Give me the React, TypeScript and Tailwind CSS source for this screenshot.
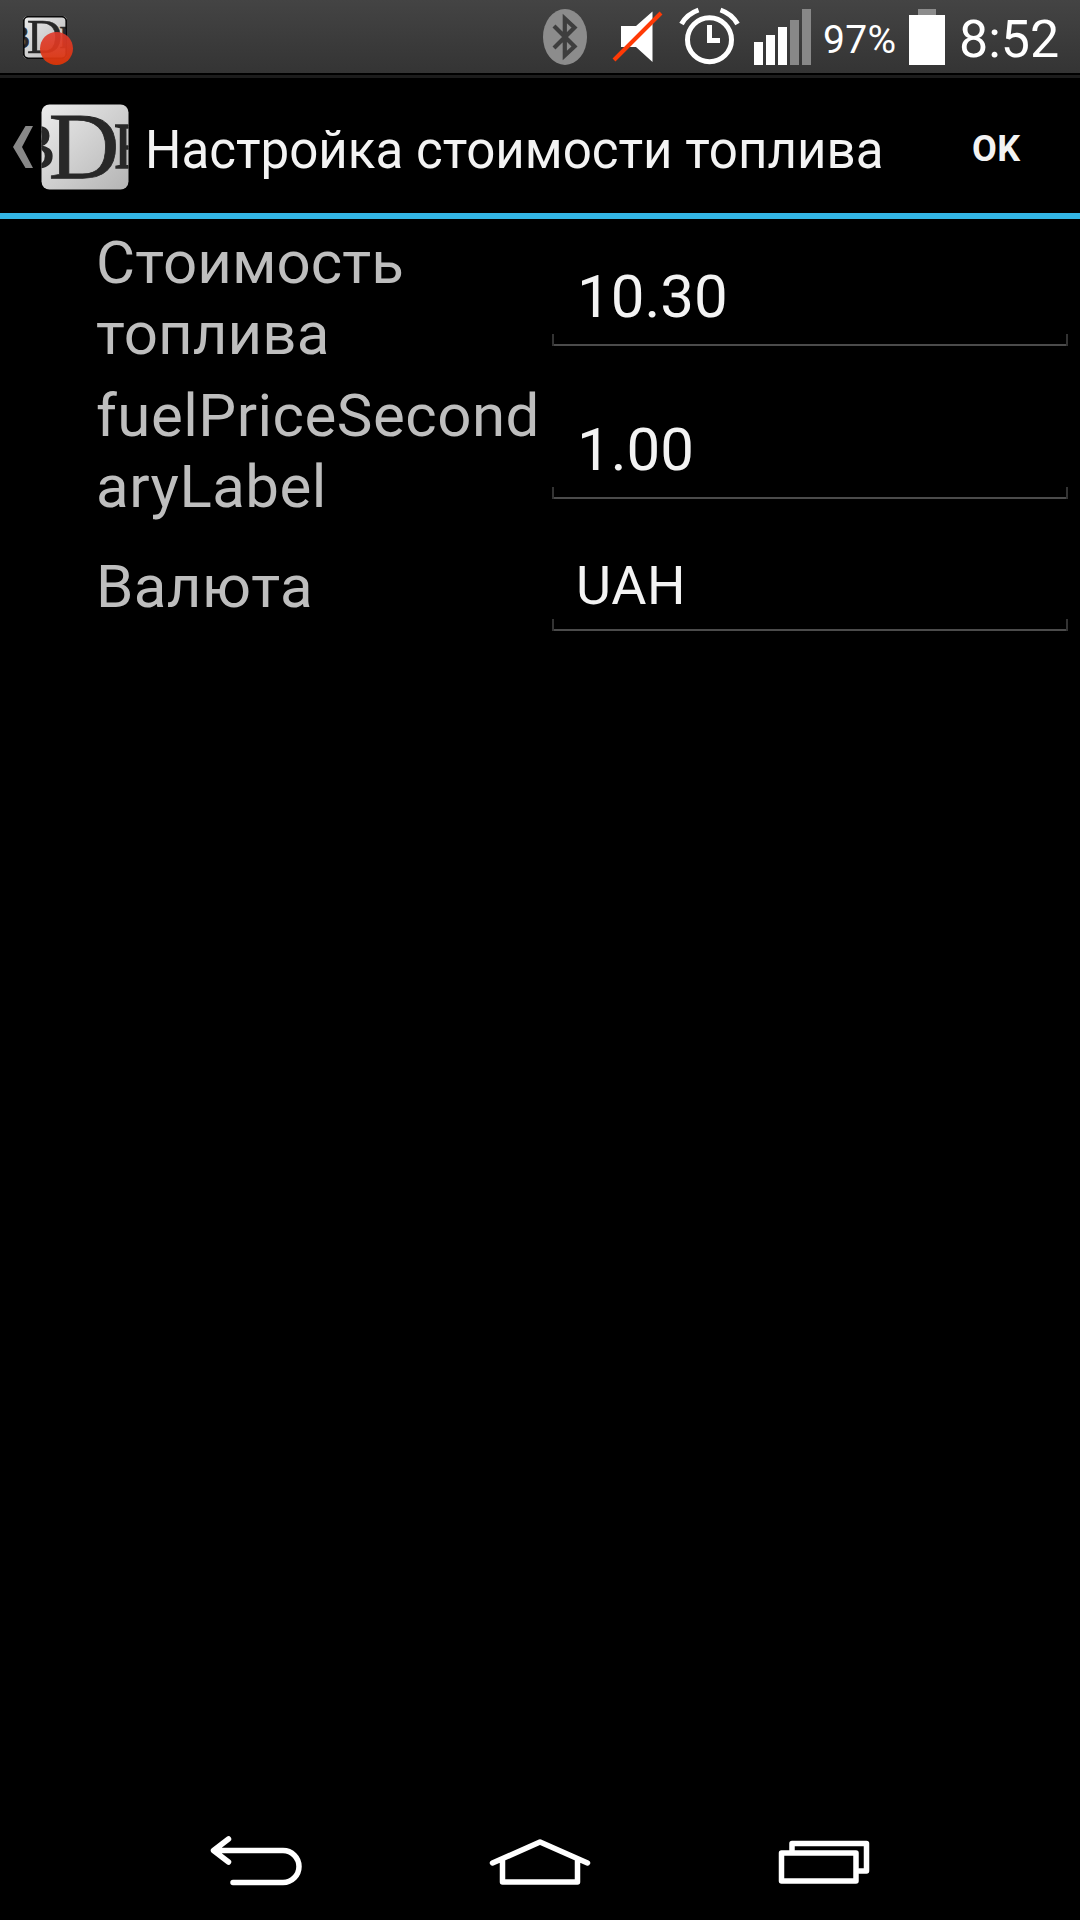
import React from "react";

function Logo({ className, outline = false }: { className: string; outline?: boolean }) {
  const id = outline ? "small" : "large";
  return (
    <svg className={className} viewBox="0 0 88 87" preserveAspectRatio="none" fontFamily="Liberation Serif, serif">
      <defs>
        <linearGradient id={`g-${id}`} x1="0" y1="0" x2="1" y2="1">
          <stop offset="0" stopColor="#ececec" />
          <stop offset="1" stopColor="#b4b4b4" />
        </linearGradient>
        <clipPath id={`c-${id}`}>
          <rect x="0.5" y="0.5" width="87" height="86" rx="8" />
        </clipPath>
      </defs>
      <g clipPath={`url(#c-${id})`} fill="#282828" stroke="#282828">
        <rect width="88" height="87" fill={`url(#g-${id})`} stroke="none" />
        <text x="-28" y="65" fontSize="64" strokeWidth="1.5" textLength="42" lengthAdjust="spacingAndGlyphs">B</text>
        <text x="7.5" y="75.500" fontSize="97" strokeWidth="0.8" textLength="71" lengthAdjust="spacingAndGlyphs">D</text>
        <text x="73" y="65" fontSize="66" strokeWidth="1.5" textLength="38" lengthAdjust="spacingAndGlyphs">R</text>
      </g>
      {outline && <rect x="1.5" y="1.5" width="85" height="84" rx="9" fill="none" stroke="#0a0a0a" strokeWidth="3.500" />}
    </svg>
  );
}

function StatusBar() {
  return (
    <div className="flex h-[73px] items-start bg-linear-to-b from-[#444444] to-[#343434]">
      <div className="relative ml-[23px] mt-4">
        <Logo outline className="h-[43px] w-[44px]" />
        <div className="absolute left-[17px] top-4 size-[33px] rounded-full bg-linear-to-b from-[#e03a2c]/90 to-[#dc3505]/95" />
      </div>
      <svg className="ml-auto h-[73px] w-[290px] shrink-0" viewBox="530 0 290 73">
        <ellipse cx="565" cy="37" rx="22" ry="28" fill="#8c8c8c" />
        <path d="M554 26 L574.500 46.500 L564.800 55.500 V18.500 L574.500 27.500 L554 48" fill="none" stroke="#3e3e3e" strokeWidth="4.200" />
        <path d="M621 26 H636 L652.500 11.500 V62 L636 47 H621 Z" fill="#fff" />
        <path d="M614 60 L661 13" stroke="#ff3a06" strokeWidth="4" />
        <circle cx="709.500" cy="39.700" r="22" fill="none" stroke="#fff" strokeWidth="5" />
        <path d="M709.500 25 V40.500 H720" fill="none" stroke="#fff" strokeWidth="5" />
        <path d="M681.500 24 Q687 14 698.500 10 M720.500 10 Q732 14 737.500 24" fill="none" stroke="#fff" strokeWidth="5" />
        <path d="M754 42 H763 V65 H754 Z M766 35 H775 V65 H766 Z M778 27 H787 V65 H778 Z" fill="#fff" />
        <path d="M790 20 H799 V65 H790 Z M802 9 H811 V65 H802 Z" fill="#888" />
      </svg>
      <span className="ml-[3px] mt-[17px] w-[86px] whitespace-nowrap text-[39px] leading-[46px] tracking-[0.3px] text-white">97%</span>
      <svg className="h-[73px] w-[36px] shrink-0" viewBox="0 0 36 73">
        <path d="M9 9 H27 V15 H9 Z" fill="#8c8c8c" />
        <path d="M0 15 H36 V65 H0 Z" fill="#fff" />
      </svg>
      <span className="ml-[14px] mt-[10px] w-[121px] whitespace-nowrap text-[52px] leading-[60px] text-white">8:52</span>
    </div>
  );
}

function ActionBar() {
  return (
    <header className="flex h-[141px] items-start border-b-[6px] border-[#33b5e5]">
      <svg className="ml-[13px] mt-[48px] h-[42px] w-[20px]" viewBox="0 0 20 42">
        <path d="M12.500 0 H20 L9 21 L20 42 H12.500 L0 21 Z" fill="#888" />
      </svg>
      <Logo className="ml-2 mt-[26px] h-[86px] w-[88px]" />
      <h1 className="ml-[16px] mt-[40px] w-[759px] origin-left scale-x-[0.946] whitespace-nowrap text-[54px] leading-[64px] text-[#f3f3f3]">Настройка стоимости топлива</h1>
      <button className="ml-[68px] mt-[49px] text-[36px] font-bold leading-[44px] tracking-[0.5px] text-[#f3f3f3]">OK</button>
    </header>
  );
}

function Field({ value, className }: { value: string; className: string }) {
  return (
    <div className={`relative ml-[6px] w-[516px] whitespace-nowrap text-[#f3f3f3] ${className}`}>
      {value}
      <div className="absolute inset-x-0 bottom-0 h-3 border-x-2 border-[#333]" />
      <div className="absolute inset-x-[2px] bottom-0 h-[2px] bg-[#4b4b4b]" />
    </div>
  );
}

function Label({ lines, className }: { lines: string[]; className: string }) {
  return (
    <div className={`w-[450px] whitespace-nowrap text-[60px] leading-[71px] text-[#bebebe] ${className}`}>
      {lines.map((l) => <div key={l}>{l}</div>)}
    </div>
  );
}

function NavBar() {
  return (
    <nav className="mt-auto flex h-[110px]">
      <svg className="h-[110px] w-full" viewBox="0 1810 1080 110" fill="none" stroke="#fff" strokeWidth="5.500" strokeLinecap="round" strokeLinejoin="round">
        <path d="M228.500 1839 L213.500 1850.500 L228.500 1862 M214 1850.500 H283 A16 16 0 0 1 283 1882.500 H233" />
        <path d="M492.500 1863 L540 1842 L587.500 1863 M502.500 1860 V1882 H577.500 V1860" />
        <path d="M792 1850 V1843.500 H866.500 V1871 H859" />
        <rect x="781.500" y="1853" width="74.500" height="28" />
      </svg>
    </nav>
  );
}

export default function App() {
  return (
    <div className="flex h-[1920px] w-[1080px] flex-col overflow-hidden bg-black font-[Roboto,sans-serif]">
      <StatusBar />
      <div className="h-[5px] border-b-[3px] border-[#1c1c1c]" />
      <ActionBar />
      <main className="flex flex-col pl-[96px] pt-2">
        <div className="flex h-[153px] items-start">
          <Label lines={["Стоимость", "топлива"]} className="tracking-[0.1px]" />
          <Field value="10.30" className="mt-[20px] h-[99px] pl-[25px] pt-[14px] text-[60px] leading-[71px]" />
        </div>
        <div className="flex h-[153px] items-start">
          <Label lines={["fuelPriceSecond", "aryLabel"]} className="tracking-[0.5px]" />
          <Field value="1.00" className="mt-[20px] h-[99px] pl-[25px] pt-[14px] text-[60px] leading-[71px]" />
        </div>
        <div className="flex items-start pt-[18px]">
          <Label lines={["Валюта"]} className="tracking-[0.4px]" />
          <Field value="UAH" className="-mt-[8px] h-[88px] pl-[24px] pt-[11px] text-[54px] leading-[64px] tracking-[0.7px]" />
        </div>
      </main>
      <NavBar />
    </div>
  );
}
